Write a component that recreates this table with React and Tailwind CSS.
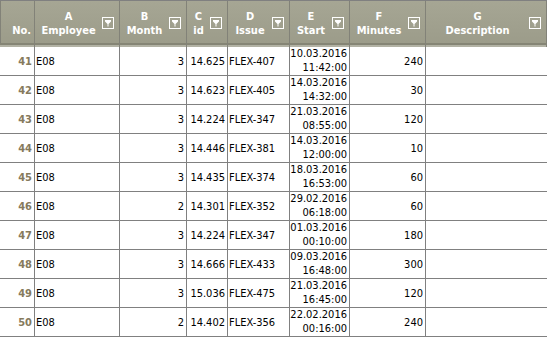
import React from "react";

const rows = [
  ["41", "E08", "3", "14.625", "FLEX-407", "10.03.2016", "11:42:00", "240"],
  ["42", "E08", "3", "14.623", "FLEX-405", "14.03.2016", "14:32:00", "30"],
  ["43", "E08", "3", "14.224", "FLEX-347", "21.03.2016", "08:55:00", "120"],
  ["44", "E08", "3", "14.446", "FLEX-381", "14.03.2016", "12:00:00", "10"],
  ["45", "E08", "3", "14.435", "FLEX-374", "18.03.2016", "16:53:00", "60"],
  ["46", "E08", "2", "14.301", "FLEX-352", "29.02.2016", "06:18:00", "60"],
  ["47", "E08", "3", "14.224", "FLEX-347", "01.03.2016", "00:10:00", "180"],
  ["48", "E08", "3", "14.666", "FLEX-433", "09.03.2016", "16:48:00", "300"],
  ["49", "E08", "3", "15.036", "FLEX-475", "21.03.2016", "16:45:00", "120"],
  ["50", "E08", "2", "14.402", "FLEX-356", "22.02.2016", "00:16:00", "240"],
];

const headers = [
  ["A", "Employee"],
  ["B", "Month"],
  ["C", "id"],
  ["D", "Issue"],
  ["E", "Start"],
  ["F", "Minutes"],
  ["G", "Description"],
];

function FilterIcon() {
  return (
    <svg width="12" height="12" viewBox="0 0 12 12" className="shrink-0 block">
      <rect x="0.5" y="0.5" width="11" height="11" fill="none" stroke="#ffffff" strokeWidth="1" />
      <path d="M3 3 H9 V4.5 L6.5 7 V9.5 H5.5 V7 L3 4.5 Z" fill="#ffffff" />
    </svg>
  );
}

const cols = "grid grid-cols-[35px_85px_67px_41px_62px_60px_76px_1fr]";

export default function App() {
  return (
    <div
      className="w-[547px] h-[339px] overflow-hidden bg-white text-[11px]"
      style={{ fontFamily: '"DejaVu Sans Condensed", "DejaVu Sans", sans-serif' }}
    >
      <div className="border-t border-[#808080] bg-gradient-to-b from-[#a6a694] to-[#9b9b89]">
        <div className={cols + " h-[42px]"}>
          <div className="border-l border-r border-[#828278] flex items-center justify-end pr-[3px] pt-[3px] font-bold text-white leading-[14px]">
            <div className="text-right">
              <div>&nbsp;</div>
              <div>No.</div>
            </div>
          </div>
          {headers.map(([l, n], i) => (
            <div
              key={i}
              className="border-r border-[#828278] flex items-center pt-[3px] pr-[5px] font-bold text-white leading-[14px]"
            >
              <div className="flex-1 text-center whitespace-nowrap">
                <div>{l}</div>
                <div>{n}</div>
              </div>
              <div className="-mt-[2px]">
                <FilterIcon />
              </div>
            </div>
          ))}
        </div>
        <div className={cols + " h-[2px] bg-[#858575]"}>
          {headers.concat([[0, 0]]).map((_, i) => (
            <div key={i} className="border-r border-[#828278]" />
          ))}
        </div>
        <div className={cols + " h-[2px] bg-[#b2b2a4]"}>
          {headers.concat([[0, 0]]).map((_, i) => (
            <div key={i} className="border-r border-[#828278]" />
          ))}
        </div>
      </div>
      {rows.map((r) => (
        <div key={r[0]} className={cols + " h-[29px] border-b border-[#808080] text-black leading-[13px]"}>
          <div className="border-r border-[#808080] flex items-center justify-end pr-[2px] font-bold text-[#867a5c]">
            {r[0]}
          </div>
          <div className="border-r border-[#808080] flex items-center pl-[1px]">{r[1]}</div>
          <div className="border-r border-[#808080] flex items-center justify-end pr-[2px]">{r[2]}</div>
          <div className="border-r border-[#808080] flex items-center justify-end pr-[2px]">{r[3]}</div>
          <div className="border-r border-[#808080] flex items-center pl-[1px]">{r[4]}</div>
          <div className="border-r border-[#808080] flex items-center justify-end pr-[2px]">
            <div className="text-right leading-[14px]">
              <div>{r[5]}</div>
              <div>{r[6]}</div>
            </div>
          </div>
          <div className="border-r border-[#808080] flex items-center justify-end pr-[2px]">{r[7]}</div>
          <div />
        </div>
      ))}
    </div>
  );
}
